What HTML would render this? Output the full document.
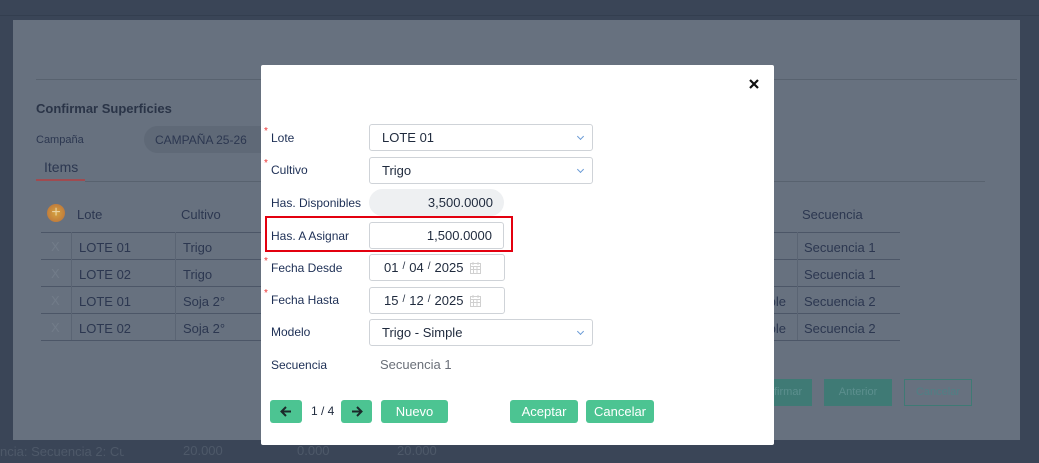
<!DOCTYPE html>
<html><head><meta charset="utf-8"><style>
*{box-sizing:border-box;margin:0;padding:0}
body{width:1039px;height:463px;overflow:hidden;background:#3a4557;font-family:"Liberation Sans",sans-serif;position:relative}
.a{position:absolute;white-space:nowrap}
.bg{color:#2c3750;font-size:13px}
.lbl{position:absolute;left:271px;font-size:12px;color:#1d2f55}
.req::before{content:"*";color:#e33;position:absolute;left:-7px;top:-5px;font-size:10px}
.inp{position:absolute;left:369px;height:27px;border:1px solid #cfd3d8;border-radius:3px;background:#fff;font-size:13px;color:#1f2a3d;padding-left:12px;line-height:25px}
.chev{position:absolute;right:9px;top:9px;width:5px;height:5px;border-right:1px solid #6a9bd6;border-bottom:1px solid #6a9bd6;transform:rotate(45deg)}
.btn{position:absolute;top:400px;height:23px;background:#4cc492;border-radius:3px;color:#fff;font-size:13px;text-align:center;line-height:23px}
.hl{position:absolute;height:1px;background:#4c5667}
.sl{font-size:10px;position:relative;top:-3px;margin:0 4px}
.cal{position:absolute;left:100px;top:7px}
</style></head><body>
<div class="a" style="left:0;top:15px;width:1039px;height:1px;background:#333e4f"></div>
<div class="a" style="left:13px;top:20px;width:1007px;height:420px;background:#67717f"></div>
<div class="a" style="left:36px;top:79px;width:981px;height:1px;background:#58626f"></div>
<div class="a" style="left:36px;top:101px;font-size:13px;font-weight:bold;color:#2a3447">Confirmar Superficies</div>
<div class="a bg" style="left:36px;top:134px;font-size:11px">Campaña</div>
<div class="a" style="left:144px;top:126px;width:130px;height:27px;border-radius:14px;background:#5f6977"></div>
<div class="a bg" style="left:155px;top:133px;font-size:12px">CAMPAÑA 25-26</div>
<div class="a bg" style="left:44px;top:159px;font-size:14px">Items</div>
<div class="a" style="left:36px;top:179px;width:49px;height:2px;background:#a04b50"></div>
<div class="a" style="left:85px;top:181px;width:900px;height:1px;background:#58626f"></div>
<div class="a" style="left:47px;top:204px;width:18px;height:18px;border-radius:50%;background:radial-gradient(circle,#d6a340,#b86d3a);color:#ead2a0;font-size:16px;line-height:17px;text-align:center">+</div>
<div class="a bg" style="left:77px;top:207px">Lote</div>
<div class="a bg" style="left:181px;top:207px">Cultivo</div>
<div class="a bg" style="left:802px;top:207px">Secuencia</div>
<div class="hl" style="left:41px;top:232px;width:220px"></div><div class="hl" style="left:774px;top:232px;width:126px"></div>
<div class="hl" style="left:41px;top:259px;width:220px"></div><div class="hl" style="left:774px;top:259px;width:126px"></div>
<div class="hl" style="left:41px;top:286px;width:220px"></div><div class="hl" style="left:774px;top:286px;width:126px"></div>
<div class="hl" style="left:41px;top:313px;width:220px"></div><div class="hl" style="left:774px;top:313px;width:126px"></div>
<div class="hl" style="left:41px;top:340px;width:220px"></div><div class="hl" style="left:774px;top:340px;width:126px"></div>
<div class="a" style="left:71px;top:232px;width:1px;height:108px;background:#5a6473"></div>
<div class="a" style="left:175px;top:232px;width:1px;height:108px;background:#5a6473"></div>
<div class="a" style="left:797px;top:232px;width:1px;height:108px;background:#5a6473"></div>
<div class="a bg" style="left:51px;top:239px;color:#727c89">X</div><div class="a bg" style="left:79px;top:240px">LOTE 01</div><div class="a bg" style="left:183px;top:240px">Trigo</div><div class="a bg" style="left:804px;top:240px">Secuencia 1</div>
<div class="a bg" style="left:51px;top:266px;color:#727c89">X</div><div class="a bg" style="left:79px;top:267px">LOTE 02</div><div class="a bg" style="left:183px;top:267px">Trigo</div><div class="a bg" style="left:804px;top:267px">Secuencia 1</div>
<div class="a bg" style="left:51px;top:293px;color:#727c89">X</div><div class="a bg" style="left:79px;top:294px">LOTE 01</div><div class="a bg" style="left:183px;top:294px">Soja 2°</div><div class="a bg" style="left:774px;top:294px;width:12px;overflow:hidden;direction:rtl">ple</div><div class="a bg" style="left:804px;top:294px">Secuencia 2</div>
<div class="a bg" style="left:51px;top:320px;color:#727c89">X</div><div class="a bg" style="left:79px;top:321px">LOTE 02</div><div class="a bg" style="left:183px;top:321px">Soja 2°</div><div class="a bg" style="left:774px;top:321px;width:12px;overflow:hidden;direction:rtl">ple</div><div class="a bg" style="left:804px;top:321px">Secuencia 2</div>
<div class="a" style="left:774px;top:379px;width:38px;height:27px;background:#3f7a75;color:#5c8f8e;font-size:11px;line-height:27px">firmar</div>
<div class="a" style="left:824px;top:379px;width:68px;height:27px;background:#3f7a75;color:#5c8f8e;font-size:11px;line-height:27px;text-align:center">Anterior</div>
<div class="a" style="left:904px;top:379px;width:68px;height:27px;border:1px solid #3f7a75;color:#4f8085;font-size:11px;line-height:25px;text-align:center">Cancelar</div>
<div class="a" style="left:0;top:444px;font-size:13px;color:#4e5969;width:124px;overflow:hidden">ncia: Secuencia 2: Culti</div>
<div class="a" style="left:183px;top:443px;font-size:13px;color:#4e5969">20.000</div>
<div class="a" style="left:297px;top:443px;font-size:13px;color:#4e5969">0.000</div>
<div class="a" style="left:397px;top:443px;font-size:13px;color:#4e5969">20.000</div>

<div class="a" style="left:261px;top:65px;width:513px;height:380px;background:#fff;border-radius:2px"></div>
<svg class="a" style="left:749px;top:79px" width="10" height="10" viewBox="0 0 10 10"><path d="M1 1L9 9M9 1L1 9" stroke="#111" stroke-width="2.2"/></svg>

<div class="lbl req" style="top:131px">Lote</div>
<div class="inp" style="top:124px;width:224px">LOTE 01<span class="chev"></span></div>
<div class="lbl req" style="top:163px">Cultivo</div>
<div class="inp" style="top:157px;width:224px">Trigo<span class="chev"></span></div>
<div class="lbl" style="top:196px">Has. Disponibles</div>
<div class="a" style="left:369px;top:189px;width:135px;height:27px;border-radius:14px;background:#eef0f2;font-size:13px;color:#1f2a3d;text-align:right;padding-right:11px;line-height:27px">3,500.0000</div>
<div class="a" style="left:265px;top:216px;width:248px;height:36px;border:2px solid #e3000f"></div>
<div class="lbl" style="top:229px">Has. A Asignar</div>
<div class="inp" style="top:222px;width:135px;text-align:right;padding-right:11px">1,500.0000</div>
<div class="lbl req" style="top:261px">Fecha Desde</div>
<div class="inp" style="top:254px;width:136px;padding-left:14px">01<span class="sl">/</span>04<span class="sl">/</span>2025<svg class="cal" width="11" height="12" viewBox="0 0 11 12"><rect x="0.5" y="1.5" width="10" height="10" fill="none" stroke="#d0d0d0"/><path d="M0.5 4.5H10.5M0.5 7.5H10.5M3.5 4.5V11.5M7 4.5V11.5M3 0V3M8 0V3" stroke="#d0d0d0"/></svg></div>
<div class="lbl req" style="top:293px">Fecha Hasta</div>
<div class="inp" style="top:287px;width:136px;padding-left:14px">15<span class="sl">/</span>12<span class="sl">/</span>2025<svg class="cal" width="11" height="12" viewBox="0 0 11 12"><rect x="0.5" y="1.5" width="10" height="10" fill="none" stroke="#d0d0d0"/><path d="M0.5 4.5H10.5M0.5 7.5H10.5M3.5 4.5V11.5M7 4.5V11.5M3 0V3M8 0V3" stroke="#d0d0d0"/></svg></div>
<div class="lbl" style="top:325px">Modelo</div>
<div class="inp" style="top:319px;width:224px">Trigo - Simple<span class="chev"></span></div>
<div class="lbl" style="top:358px">Secuencia</div>
<div class="a" style="left:380px;top:357px;font-size:13px;color:#6a6f78">Secuencia 1</div>

<div class="btn" style="left:270px;width:32px"><svg style="margin-top:6px" width="12" height="11" viewBox="0 0 12 11"><path d="M11 5.5H2M6 1L1.5 5.5L6 10" fill="none" stroke="#1b2a2a" stroke-width="2"/></svg></div>
<div class="a" style="left:311px;top:404px;font-size:12px;color:#1f2a3d">1 / 4</div>
<div class="btn" style="left:341px;width:31px"><svg style="margin-top:6px" width="12" height="11" viewBox="0 0 12 11"><path d="M1 5.5H10M6 1L10.5 5.5L6 10" fill="none" stroke="#1b2a2a" stroke-width="2"/></svg></div>
<div class="btn" style="left:381px;width:67px">Nuevo</div>
<div class="btn" style="left:510px;width:68px">Aceptar</div>
<div class="btn" style="left:586px;width:68px">Cancelar</div>
</body></html>
